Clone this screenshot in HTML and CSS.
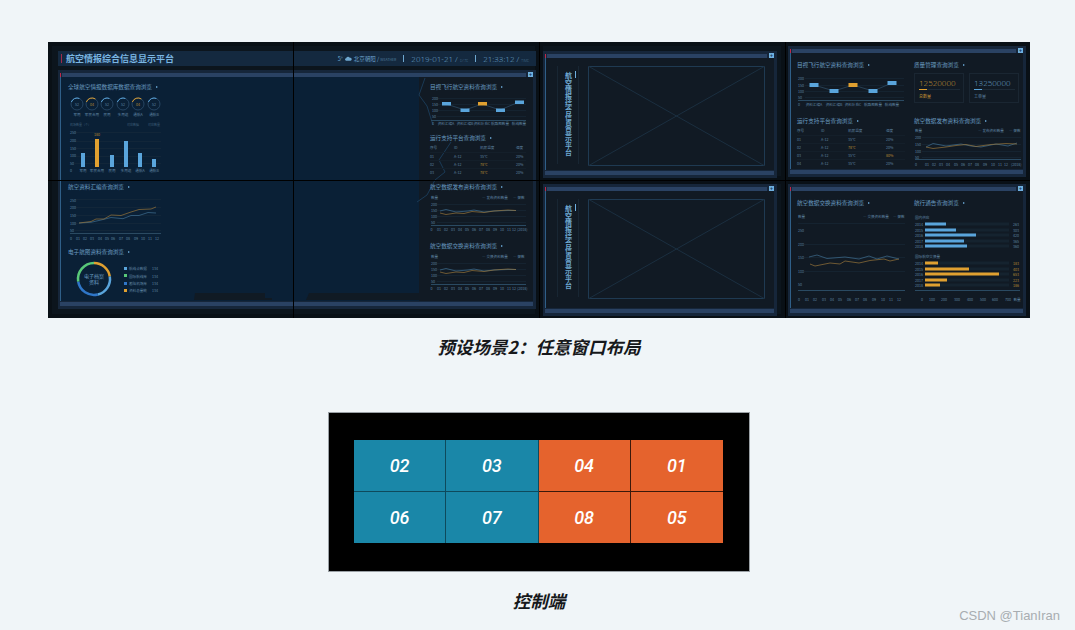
FILE: index.html
```html
<!DOCTYPE html>
<html lang="zh-CN">
<head>
  <meta charset="UTF-8">
  <title>预设场景2</title>
  <link rel="stylesheet" href="styles.css">
</head>
<body>
<div class="page">

  <div class="wall">

    <!-- big window, 2x2 screens -->
    <div class="window window-big">
      <div class="topbar">
        <div class="app-title">航空情报综合信息显示平台</div>
        <div class="status">
          <span class="temp">5°</span>
          <svg class="cloud" viewBox="0 0 8 5" width="7" height="5"><path d="M1.5 5a1.4 1.4 0 0 1-.2-2.8A2.2 2.2 0 0 1 5.4 1.6 1.7 1.7 0 0 1 6.3 5z" fill="#6fa8d0"/></svg>
          <span class="place">北京朝阳 / <small>WEATHER</small></span>
          <i class="sep"></i>
          <span class="big-num">2019-01-21 / <small>DATE</small></span>
          <i class="sep"></i>
          <span class="big-num">21:33:12 / <small>TIME</small></span>
        </div>
      </div>
      <div class="panel panel-big">
        <div class="panel-top"><i class="red"></i><div class="bar"></div><b class="plus">+</b></div>
        <div class="panel-body body-big">

          <div class="col col-left">
            <section>
              <h3 class="sec-title">全球航空情报数据库数据查询浏览</h3>
              <svg class="chart" width="95" height="84" viewBox="65 92 95 84">
                <g class="gauges">
                  <circle cx="74" cy="104" r="6"/><path d="M68.4 102a6 6 0 0 1 8-3.5"/>
                  <circle cx="89" cy="104" r="6"/><path class="or" d="M83.4 102a6 6 0 0 1 9-3"/>
                  <circle cx="104" cy="104" r="6"/><path d="M98.4 102a6 6 0 0 1 8-3.5"/>
                  <circle cx="120" cy="104" r="6"/><path d="M114.4 102a6 6 0 0 1 8-3.5"/>
                  <circle cx="135" cy="104" r="6"/><path class="or" d="M129.4 102a6 6 0 0 1 9-3"/>
                  <circle cx="151" cy="104" r="6"/><path d="M145.4 102a6 6 0 0 1 8-3.5"/>
                </g>
                <g class="tick mid">
                  <text x="74" y="105.500">52</text><text class="t-or" x="89" y="105.500">04</text><text x="104" y="105.500">52</text>
                  <text x="120" y="105.500">52</text><text class="t-or" x="135" y="105.500">04</text><text x="151" y="105.500">52</text>
                  <text x="74" y="116">军用</text><text x="89" y="116">军民合用</text><text x="104" y="116">民用</text>
                  <text x="120" y="116">多用途</text><text x="135" y="116">通航A</text><text x="151" y="116">通航B</text>
                </g>
                <g class="tick dim">
                  <text x="67" y="126">机场数量（个）</text><text x="124" y="126">对应数据</text><text x="145" y="126">对应数量</text>
                </g>
                <g class="grid">
                  <path d="M72 132.500H158M72 141.500H158M72 148.500H158M72 156.500H158M72 163.500H158"/>
                </g>
                <g class="tick">
                  <text x="67" y="134">250</text><text x="67" y="142">200</text><text x="67" y="150">150</text>
                  <text x="67" y="157">100</text><text x="67" y="165">50</text><text x="67" y="172">0</text>
                </g>
                <rect class="blue" x="78" y="153" width="4" height="14"/>
                <rect class="orange" x="92" y="139" width="4" height="28"/>
                <rect class="blue" x="107" y="155" width="4" height="12"/>
                <rect class="blue" x="121" y="141" width="4" height="26"/>
                <rect class="blue" x="135" y="153" width="4" height="14"/>
                <rect class="blue" x="149" y="159" width="4" height="8"/>
                <g class="tick mid">
                  <text class="t-or" x="94" y="136">180</text>
                  <text x="80" y="172">军用</text><text x="94" y="172">军民合用</text><text x="109" y="172">民用</text>
                  <text x="123" y="172">多用途</text><text x="137" y="172">通航A</text><text x="151" y="172">通航B</text>
                </g>
              </svg>
            </section>
            <section>
              <h3 class="sec-title">航空资料汇编查询浏览</h3>
              <svg class="chart" width="95" height="49" viewBox="65 192 95 49">
                <path class="grid-line" d="M72 199.500H158M72 207.500H158M72 215.500H158M72 223.500H158M72 230.500H158"/>
                <path class="axis" d="M67 233.500H158"/>
                <g class="tick">
                  <text x="67" y="201.500">250</text><text x="67" y="209">200</text><text x="67" y="217">150</text>
                  <text x="67" y="224.500">100</text><text x="67" y="232">50</text>
                </g>
                <path class="line-blue" d="M76 223L88 222.300L98 220L108 217.500L120 218.700L128 215.500L136 215.500L145 212.500L153 213"/>
                <path class="line-orange" d="M76 223L88 221.500L93 219L101 219L108 215L118 215.500L128 212L136 209.500L148 209L153 207"/>
                <g class="tick mid">
                  <text x="68" y="239.500">0</text><text x="75" y="239.500">01</text><text x="82" y="239.500">02</text><text x="89" y="239.500">03</text>
                  <text x="97" y="239.500">04</text><text x="104" y="239.500">05</text><text x="110" y="239.500">06</text><text x="118" y="239.500">07</text>
                  <text x="125" y="239.500">08</text><text x="133" y="239.500">09</text><text x="140" y="239.500">10</text><text x="147" y="239.500">11</text><text x="154" y="239.500">12</text>
                </g>
              </svg>
            </section>
            <section>
              <h3 class="sec-title">电子航图资料查询浏览</h3>
              <svg class="chart" width="95" height="43" viewBox="65 257 95 43">
                <g class="donut">
                  <path stroke="#e0a030" d="M91 263a16 16 0 0 1 15.800 13.500"/>
                  <path stroke="#5aa5dc" d="M106.800 276.500a16 16 0 0 1-12 18"/>
                  <path stroke="#2f76c8" d="M94.800 294.500a16 16 0 0 1-19.600-13"/>
                  <path stroke="#58c878" d="M75.200 281.500a16 16 0 0 1 15.800-18.500"/>
                </g>
                <g class="tick mid big-tick"><text x="91" y="278">电子档案</text><text x="91" y="284">资料</text></g>
                <rect x="121" y="267" width="3" height="3" fill="#5aa5dc"/>
                <rect x="121" y="274" width="3" height="3" fill="#58c878"/>
                <rect x="121" y="282" width="3" height="3" fill="#2f76c8"/>
                <rect x="121" y="289" width="3" height="3" fill="#e0a030"/>
                <g class="tick">
                  <text x="126" y="270">航线点数据</text><text x="149" y="270">134</text>
                  <text x="126" y="277.500">国际航线库</text><text x="149" y="277.500">134</text>
                  <text x="126" y="285">著陆机场库</text><text x="149" y="285">134</text>
                  <text x="126" y="292">资料总量统</text><text x="149" y="292">134</text>
                </g>
              </svg>
            </section>
          </div>

          <svg class="land" width="225" height="7" viewBox="197 294 225 7"><path d="M198 294H268V299H275V301H197ZM312 294H422V301H309Z" fill="#101a24"/></svg>

          <div class="col col-right">
            <svg class="map-deco" width="40" height="222" viewBox="416 78 40 222">
              <path d="M428 78L422 95L430 106L436 125M454 142L442 160L448 172L438 180L430 195L420 202" fill="none" stroke="#1a3a56" stroke-width="1"/>
            </svg>
            <section>
              <h3 class="sec-title">目视飞行航空资料查询浏览</h3>
              <svg class="chart" width="98" height="35" viewBox="432 92 98 35">
                <path class="grid-line" d="M439 98.500H528M439 104.500H528M439 110.500H528M439 116.500H528"/>
                <path class="axis" d="M433 120.500H528"/>
                <g class="tick">
                  <text x="434" y="100">200</text><text x="434" y="105.500">150</text><text x="434" y="112">100</text><text x="434" y="118">50</text><text x="434" y="124.500">0</text>
                </g>
                <path class="line-dim" d="M448 104L467 110L484 104L502 110L521 102"/>
                <g class="tag"><rect x="444" y="102" width="9" height="3.500"/><rect x="462.500" y="108.500" width="9" height="3.500"/><rect class="orange" x="480" y="102" width="9" height="3.500"/><rect x="498" y="108.500" width="9" height="3.500"/><rect x="517" y="100.500" width="9" height="3.500"/></g>
                <g class="tick mid">
                  <text x="448" y="124.500">资料汇编A</text><text x="467" y="124.500">资料汇编B</text><text x="484" y="124.500">资料补充C</text><text x="502" y="124.500">航路图数量</text><text x="521" y="124.500">航线数量</text>
                </g>
              </svg>
            </section>
            <section>
              <h3 class="sec-title">运行支持平台查询浏览</h3>
              <div class="tbl tbl-small">
                <div class="tr th"><span>序号</span><span>ID</span><span>机房温度</span><span>湿度</span></div>
                <div class="tr"><span>01</span><span>A-12</span><span>35℃</span><span>20%</span></div>
                <div class="tr"><span>02</span><span>A-12</span><span class="hot">78℃</span><span>20%</span></div>
                <div class="tr"><span>03</span><span>A-12</span><span class="hot">78℃</span><span>20%</span></div>
              </div>
            </section>
            <section>
              <h3 class="sec-title">航空数据发布资料查询浏览</h3>
              <svg class="chart" width="98" height="43" viewBox="432 196 98 43">
                <use href="#mini-line" x="0" y="0"/>
                <text class="tick" x="484" y="203">— 发布资料数量</text><text class="tick" x="515" y="203">— 架数</text>
              </svg>
            </section>
            <section>
              <h3 class="sec-title">航空数据交换资料查询浏览</h3>
              <svg class="chart" width="98" height="43" viewBox="432 255 98 43">
                <use href="#mini-line" x="0" y="59"/>
                <text class="tick" x="484" y="262">— 交换资料数量</text><text class="tick" x="515" y="262">— 架数</text>
              </svg>
            </section>
          </div>
        </div>
        <div class="bar bar-bottom"></div>
      </div>
    </div>

    <!-- third column -->
    <div class="window window-mid">
      <div class="panel">
        <div class="panel-top"><i class="red"></i><div class="bar"></div><b class="plus">+</b></div>
        <div class="panel-body body-holder">
          <div class="v-title"><span>航空情报综合信息显示平台</span></div>
          <svg class="holder" width="177" height="100" viewBox="0 0 177 100" preserveAspectRatio="none">
            <rect x="0.500" y="0.500" width="176" height="99" fill="none" stroke="#1f3a52"/>
            <path d="M0 0L177 100M177 0L0 100" stroke="#1b2f40" fill="none"/>
          </svg>
        </div>
        <div class="bar bar-bottom"></div>
      </div>
    </div>

    <!-- fourth column, top -->
    <div class="window window-side">
      <div class="panel">
        <div class="panel-top"><i class="red"></i><div class="bar"></div><b class="plus">+</b></div>
        <div class="panel-body body-two">
          <section>
            <h3 class="sec-title">目视飞行航空资料查询浏览</h3>
            <svg class="chart" width="108" height="39" viewBox="795 68 108 39">
              <path class="grid-line" d="M803 76.500H902M803 83.500H902M803 89.500H902M803 95.500H902"/>
              <path class="axis" d="M796 98.500H902"/>
              <g class="tick">
                <text x="796" y="78">200</text><text x="796" y="84.500">150</text><text x="796" y="91">100</text><text x="796" y="97">50</text><text x="796" y="104">0</text>
              </g>
              <path class="line-dim" d="M812 83L832 89L851 83L871 89L890 81"/>
              <g class="tag"><rect x="807.500" y="81" width="9" height="4"/><rect x="827.500" y="87" width="9" height="4"/><rect class="orange" x="846.500" y="81" width="9" height="4"/><rect x="866.500" y="87" width="9" height="4"/><rect x="885.500" y="79" width="9" height="4"/></g>
              <g class="tick mid">
                <text x="812" y="104">资料汇编A</text><text x="832" y="104">资料汇编B</text><text x="851" y="104">资料补充C</text><text x="871" y="104">航路图数量</text><text x="890" y="104">航线数量</text>
              </g>
            </svg>
          </section>
          <section>
            <h3 class="sec-title">质量管理查询浏览</h3>
            <div class="stats">
              <div class="stat stat-or">
                <div class="stat-num">12520000</div>
                <div class="stat-line"><i></i></div>
                <div class="stat-label">总数量</div>
              </div>
              <div class="stat">
                <div class="stat-num">13250000</div>
                <div class="stat-line"><i></i></div>
                <div class="stat-label">工单量</div>
              </div>
            </div>
          </section>
          <section>
            <h3 class="sec-title">运行支持平台查询浏览</h3>
            <div class="tbl tbl-wide">
              <div class="tr th"><span>序号</span><span>ID</span><span>机房温度</span><span>湿度</span></div>
              <div class="tr"><span>01</span><span>A-12</span><span>35℃</span><span>20%</span></div>
              <div class="tr"><span>02</span><span>A-12</span><span class="hot">78℃</span><span>20%</span></div>
              <div class="tr"><span>03</span><span>A-12</span><span>35℃</span><span class="hot">80%</span></div>
              <div class="tr"><span>04</span><span>A-12</span><span>35℃</span><span>20%</span></div>
            </div>
          </section>
          <section>
            <h3 class="sec-title">航空数据发布资料查询浏览</h3>
            <svg class="chart" width="108" height="43" viewBox="913 125 108 43">
              <g class="tick">
                <text x="914" y="131">数量</text><text x="977" y="131">— 发布资料数量</text><text x="1008" y="131">— 架数</text>
                <text x="914" y="138">200</text><text x="914" y="144.500">150</text><text x="914" y="151.500">100</text><text x="914" y="158">50</text>
              </g>
              <path class="grid-line" d="M921 136.500H1020M921 143.500H1020M921 150.500H1020M921 156.500H1020"/>
              <path class="axis" d="M914 158.500H1020"/>
              <path class="line-blue" d="M925 146L932 142.500L945 145L960 143L970 145L980 146L995 143L1007 145L1016 142"/>
              <path class="line-orange" d="M925 146L932 147.500L945 146L955 144.500L965 143.500L975 145.500L990 143.500L1005 142.500L1016 143"/>
              <g class="tick">
                <text x="914" y="164.500">0</text><text x="924" y="164.500">01</text><text x="931" y="164.500">02</text><text x="938" y="164.500">03</text><text x="945" y="164.500">04</text><text x="953" y="164.500">05</text><text x="960" y="164.500">06</text><text x="967" y="164.500">07</text><text x="974" y="164.500">08</text><text x="982" y="164.500">09</text><text x="990" y="164.500">10</text><text x="997" y="164.500">11</text><text x="1003" y="164.500">12</text><text x="1010" y="164.500">(2018)</text>
              </g>
            </svg>
          </section>
        </div>
        <div class="bar bar-bottom"></div>
      </div>
    </div>

    <div class="window window-mid window-low">
      <div class="panel">
        <div class="panel-top"><i class="red"></i><div class="bar"></div><b class="plus">+</b></div>
        <div class="panel-body body-holder">
          <div class="v-title"><span>航空情报综合信息显示平台</span></div>
          <svg class="holder" width="177" height="100" viewBox="0 0 177 100" preserveAspectRatio="none">
            <rect x="0.500" y="0.500" width="176" height="99" fill="none" stroke="#1f3a52"/>
            <path d="M0 0L177 100M177 0L0 100" stroke="#1b2f40" fill="none"/>
          </svg>
        </div>
        <div class="bar bar-bottom"></div>
      </div>
    </div>

    <!-- fourth column, bottom -->
    <div class="window window-side window-low">
      <div class="panel">
        <div class="panel-top"><i class="red"></i><div class="bar"></div><b class="plus">+</b></div>
        <div class="panel-body body-two body-low">
          <section>
            <h3 class="sec-title">航空数据交换资料查询浏览</h3>
            <svg class="chart" width="108" height="97" viewBox="795 207 108 97">
              <g class="tick">
                <text x="796" y="217">数量</text><text x="861" y="217">— 交换资料数量</text><text x="891" y="217">— 架数</text>
                <text x="796" y="231">250</text><text x="796" y="245">200</text><text x="796" y="258">150</text><text x="796" y="272">100</text><text x="796" y="285">50</text>
              </g>
              <path class="grid-line" d="M796 222.500H903M796 243.500H903M796 256.500H903M796 270.500H903"/>
              <path class="axis" d="M796 289.500H903"/>
              <path class="line-blue" d="M807 256L815 254L825 257.500L843 256L857 258L867 255L875 258L885 255L897 258"/>
              <path class="line-orange" d="M808 263L813 265L828 262L838 263L843 260L857 262L868 259.500L882 258L888 260L897 258"/>
              <g class="tick mid">
                <text x="797" y="300">0</text><text x="805" y="300">01</text><text x="813" y="300">02</text><text x="822" y="300">03</text><text x="830" y="300">04</text><text x="838" y="300">05</text><text x="847" y="300">06</text><text x="855" y="300">07</text><text x="863" y="300">08</text><text x="872" y="300">09</text><text x="881" y="300">10</text><text x="889" y="300">11</text><text x="897" y="300">12</text>
              </g>
            </svg>
          </section>
          <section>
            <h3 class="sec-title">航行通告查询浏览</h3>
            <svg class="chart" width="108" height="97" viewBox="913 207 108 97">
              <g class="tick">
                <text x="914" y="218">国内供应</text><text x="914" y="257">国际航空交换量</text>
                <text x="914" y="224.500">2014</text><text x="914" y="230.500">2015</text><text x="914" y="235.500">2016</text><text x="914" y="241.500">2017</text><text x="914" y="246.500">2018</text>
                <text x="914" y="263.500">2014</text><text x="914" y="269.500">2015</text><text x="914" y="274.500">2016</text><text x="914" y="280.500">2017</text><text x="914" y="285.500">2018</text>
              </g>
              <g fill="#15232f">
                <rect x="924" y="221.500" width="84" height="3"/><rect x="924" y="227.500" width="84" height="3"/><rect x="924" y="232.500" width="84" height="3"/><rect x="924" y="238.500" width="84" height="3"/><rect x="924" y="243.500" width="84" height="3"/>
                <rect x="924" y="260.500" width="84" height="3"/><rect x="924" y="266.500" width="84" height="3"/><rect x="924" y="271.500" width="84" height="3"/><rect x="924" y="277.500" width="84" height="3"/><rect x="924" y="282.500" width="84" height="3"/>
              </g>
              <g class="blue">
                <rect x="924" y="221.500" width="21" height="3"/><rect x="924" y="227.500" width="31" height="3"/><rect x="924" y="232.500" width="51" height="3"/><rect x="924" y="238.500" width="39" height="3"/><rect x="924" y="243.500" width="42" height="3"/>
              </g>
              <g class="orange">
                <rect x="924" y="260.500" width="13" height="3"/><rect x="924" y="266.500" width="44" height="3"/><rect x="924" y="271.500" width="74" height="3"/><rect x="924" y="277.500" width="22" height="3"/><rect x="924" y="282.500" width="15" height="3"/>
              </g>
              <g class="tick">
                <text x="1012" y="224.500">263</text><text x="1012" y="230.500">303</text><text x="1012" y="235.500">420</text><text x="1012" y="241.500">365</text><text x="1012" y="246.500">360</text>
              </g>
              <g class="tick t-or">
                <text x="1012" y="263.500">183</text><text x="1012" y="269.500">403</text><text x="1012" y="274.500">653</text><text x="1012" y="280.500">223</text><text x="1012" y="285.500">186</text>
              </g>
              <path class="axis" d="M914 289.500H1019"/>
              <g class="tick mid">
                <text x="921" y="300">0</text><text x="931" y="300">100</text><text x="943" y="300">200</text><text x="956" y="300">300</text><text x="969" y="300">400</text><text x="982" y="300">500</text><text x="994" y="300">600</text><text x="1007" y="300">700</text><text x="1016" y="300">数量</text>
              </g>
            </svg>
          </section>
        </div>
        <div class="bar bar-bottom"></div>
      </div>
    </div>

    <!-- black seams between the physical screens -->
    <i class="seam seam-v s1"></i>
    <i class="seam seam-v s2"></i>
    <i class="seam seam-v s3"></i>
    <i class="seam seam-h"></i>
  </div>

  <h2 class="caption">预设场景2：任意窗口布局</h2>

  <div class="control">
    <div class="cells">
      <div class="cell teal">02</div>
      <div class="cell teal">03</div>
      <div class="cell orange-cell">04</div>
      <div class="cell orange-cell">01</div>
      <div class="cell teal">06</div>
      <div class="cell teal">07</div>
      <div class="cell orange-cell">08</div>
      <div class="cell orange-cell">05</div>
    </div>
  </div>

  <h2 class="caption">控制端</h2>
</div>

<div class="watermark">CSDN @TianIran</div>

<!-- shared small line chart -->
<svg class="defs" width="0" height="0">
  <defs>
    <g id="mini-line">
      <g class="tick">
        <text x="433" y="203">数量</text>
        <text x="433" y="209.500">200</text><text x="433" y="215.500">150</text><text x="433" y="222">100</text><text x="433" y="228">50</text>
      </g>
      <path class="grid-line" d="M439 208.500H528M439 214.500H528M439 220.500H528M439 226.500H528"/>
      <path class="axis" d="M433 229.500H528"/>
      <path class="line-blue" d="M442 215L448 213.500L458 216L470 215L476 214L486 216L496 215L510 214.500L518 214.500"/>
      <path class="line-orange" d="M442 217L448 218.500L458 217L466 217.500L474 215.500L486 216.500L496 215L510 214L518 214.500"/>
      <g class="tick">
        <text x="432.500" y="235">0</text><text x="439" y="235">01</text><text x="446" y="235">02</text><text x="453" y="235">03</text><text x="460" y="235">04</text><text x="467" y="235">05</text><text x="474" y="235">06</text><text x="481" y="235">07</text><text x="488" y="235">08</text><text x="495" y="235">09</text><text x="502" y="235">10</text><text x="509" y="235">11</text><text x="514" y="235">12</text><text x="519" y="235">(2018)</text>
      </g>
    </g>
  </defs>
</svg>
</body>
</html>
```

FILE: styles.css
```css
* {
  box-sizing: border-box;
}

body {
  margin: 0;
  height: 630px;
  overflow: hidden;
  background: #f0f5f8;
  font-family: "Noto Sans CJK SC", "Noto Sans", sans-serif;
}

.page {
  width: 982px;
  margin-left: 48px;
  padding-top: 42px;
  display: flex;
  flex-direction: column;
  align-items: center;
}

/* video wall */
.wall {
  position: relative;
  width: 982px;
  height: 276px;
  display: grid;
  grid-template-columns: 491px 246px 245px;
  grid-template-rows: 138px 138px;
  background: #000;
  overflow: hidden;
}

.window {
  display: flex;
  flex-direction: column;
  background: #0c151d;
  box-shadow: inset 0 0 0 4px #091016;
}

.window-big {
  grid-row: 1 / 3;
  padding: 9px 3px 9px 10px;
}

.window-mid {
  padding: 9px 8px 2px 4px;
}

.window-side {
  padding: 4px 4px 3px 3px;
}

.window-low {
  padding-top: 4px;
  padding-bottom: 2px;
}

.topbar {
  height: 15px;
  padding: 0 7px 0 3px;
  flex: none;
  display: flex;
  align-items: center;
  justify-content: space-between;
  background: #14293f;
  color: #6fa8d0;
}

.app-title {
  padding-left: 4px;
  border-left: 1px solid #a02a4a;
  font-size: 9px;
  line-height: 9px;
  font-weight: 700;
  color: #7ab6e2;
}

.status {
  display: flex;
  align-items: center;
  font-size: 5.500px;
}

.temp {
  margin-right: 2px;
}

.place {
  margin-left: 2px;
}

.status small {
  font-size: 3.500px;
  color: #4f7a9c;
}

.sep {
  width: 1px;
  height: 7px;
  margin: 0 7px;
  background: #6fa8d0;
}

.big-num {
  font-family: "Open Sans", sans-serif;
  font-size: 8px;
  font-weight: 300;
}

.panel {
  flex: 1;
  min-height: 0;
  display: flex;
  flex-direction: column;
  padding: 2px 3px 3px 2px;
  background: #16263a;
}

.panel-big {
  margin-top: 4px;
}

.panel-top {
  height: 5px;
  flex: none;
  display: flex;
  align-items: center;
  gap: 1px;
}

.red {
  width: 1px;
  height: 4px;
  background: #c02848;
}

.bar {
  flex: 1;
  height: 4px;
  background: #2a4263;
}

.plus {
  width: 5px;
  height: 5px;
  margin-left: 1px;
  background: #6fb0e0;
  color: #12304c;
  font: 700 5px/5px "Liberation Sans", sans-serif;
  text-align: center;
}

.bar-bottom {
  flex: none;
  margin-top: 1px;
}

.panel-body {
  position: relative;
  flex: 1;
  min-height: 0;
  display: flex;
  border-left: 1px solid #2f5f88;
  background: #111a24;
}

.body-big {
  justify-content: space-between;
  background: #0a2036;
}

.col {
  display: flex;
  flex-direction: column;
  gap: 8px;
  padding-top: 7px;
}

.col-left {
  width: 110px;
  padding-left: 7px;
}

.col-right {
  position: relative;
  width: 114px;
  padding-left: 11px;
  background: #111a24;
}

.land {
  position: absolute;
  right: 114px;
  bottom: 1px;
}

.map-deco {
  position: absolute;
  left: -6px;
  top: 1px;
}

.col-right section {
  position: relative;
}

.sec-title {
  height: 6px;
  margin: 0 0 2px;
  display: flex;
  align-items: center;
  gap: 4px;
  font-size: 5.600px;
  line-height: 6px;
  font-weight: 400;
  color: #6a9cc0;
  white-space: nowrap;
}

.sec-title::after {
  content: "";
  border-left: 2.500px solid #6fb0e0;
  border-top: 1.500px solid transparent;
  border-bottom: 1.500px solid transparent;
}

.chart {
  display: block;
  overflow: visible;
}

.tick text,
text.tick {
  font-size: 3.600px;
  fill: #5f84a2;
  font-family: "Noto Sans CJK SC", sans-serif;
}

.big-tick text {
  font-size: 5px;
  fill: #6a9cc0;
}

.mid text {
  text-anchor: middle;
}

.dim text {
  fill: #3d5c76;
  font-size: 3px;
}

.tick .t-or,
.t-or text {
  fill: #b98a35;
}

.gauges circle {
  fill: none;
  stroke: #2c4c6c;
  stroke-width: 0.800;
}

.gauges path {
  fill: none;
  stroke: #5aa5dc;
  stroke-width: 1;
}

.gauges path.or {
  stroke: #e0a030;
}

.grid path,
.grid-line {
  fill: none;
  stroke: #1a2c3c;
  stroke-width: 0.500;
}

.axis {
  fill: none;
  stroke: #2a4a62;
  stroke-width: 1;
}

.blue,
.tag rect {
  fill: #5aa5dc;
}

.orange,
.tag rect.orange {
  fill: #e0a030;
}

.line-blue,
.line-orange,
.line-dim {
  fill: none;
  stroke-width: 0.700;
}

.line-blue {
  stroke: #3f6f90;
}

.line-orange {
  stroke: #96743a;
}

.line-dim {
  stroke: #2f4f68;
}

.donut path {
  fill: none;
  stroke-width: 2.500;
}

/* tables */
.tbl {
  font-size: 3.600px;
  color: #5f84a2;
}

.tr {
  display: grid;
  height: 8px;
  align-items: center;
  border-top: 1px solid #141f2a;
}

.th {
  height: 9px;
  border-top: 0;
}

.tbl-small .tr {
  grid-template-columns: 24px 26px 36px 1fr;
  width: 96px;
}

.tbl-wide .tr {
  grid-template-columns: 24px 27px 38px 1fr;
  width: 108px;
}

.hot {
  color: #b98a35;
}

/* third column */
.body-holder {
  padding: 8px 9px 0 11px;
  gap: 9px;
}

.v-title {
  width: 25px;
  height: 98px;
  padding-top: 6px;
  position: relative;
  display: flex;
  justify-content: center;
  border-left: 1px solid #182633;
  border-right: 1px solid #182633;
}

.v-title span {
  writing-mode: vertical-rl;
  font-size: 7px;
  line-height: 7px;
  font-weight: 700;
  color: #6fa8d0;
}

.v-title::after {
  content: "";
  position: absolute;
  left: 17px;
  top: 5px;
  width: 1px;
  height: 7px;
  background: #6fb0e0;
}

.holder {
  flex: none;
}

/* fourth column */
.body-two {
  display: grid;
  grid-template-columns: 108px 108px;
  grid-template-rows: 56px auto;
  column-gap: 9px;
  padding: 9px 0 0 6px;
  align-content: start;
}

.body-low {
  grid-template-rows: auto;
}

.stats {
  display: flex;
  gap: 5px;
  margin-top: 5px;
}

.stat {
  width: 50px;
  height: 30px;
  padding: 3px 3px 0 4px;
  border: 1px solid #1a2632;
  font-size: 4px;
  color: #5f84a2;
}

.stat-num {
  font-family: "Open Sans", sans-serif;
  font-size: 8px;
  line-height: 11px;
  font-weight: 300;
  color: #6fa8d0;
}

.stat-or .stat-num,
.stat-or .stat-label {
  color: #d09a35;
}

.stat-line {
  height: 1px;
  margin-top: 1px;
  background: #1d2a36;
}

.stat-line i {
  display: block;
  width: 8px;
  height: 1px;
  background: #5aa5dc;
}

.stat-or .stat-line i {
  background: #e0a030;
}

.stat-label {
  margin-top: 3px;
  line-height: 6px;
}

.seam {
  position: absolute;
  background: #000;
}

.seam-v {
  top: 0;
  bottom: 0;
  width: 1px;
}

.s1 { left: 245px; }
.s2 { left: 491px; }
.s3 { left: 737px; }

.seam-h {
  left: 0;
  right: 0;
  top: 138px;
  height: 1px;
}

/* captions and control */
.caption {
  height: 24px;
  margin: 17px 0 0;
  font-size: 17.500px;
  line-height: 24px;
  font-weight: 700;
  font-style: italic;
  color: #16181b;
}

.control {
  width: 422px;
  height: 160px;
  margin-top: 53px;
  display: flex;
  align-items: center;
  justify-content: center;
  background: #000;
  border: 1px solid #9aa0a5;
}

.control + .caption {
  margin-top: 17px;
}

.cells {
  width: 369px;
  height: 103px;
  margin-right: 1px;
  margin-top: -1px;
  display: grid;
  grid-template-columns: repeat(4, 1fr);
  grid-template-rows: repeat(2, 1fr);
}

.cell {
  display: flex;
  align-items: center;
  justify-content: center;
  color: #fff;
  font-family: "Roboto", sans-serif;
  font-size: 18px;
  font-weight: 500;
  font-style: italic;
  border-right: 1px solid rgba(0, 0, 0, 0.45);
  border-bottom: 1px solid rgba(0, 0, 0, 0.45);
}

.teal {
  background: #1a87a8;
}

.orange-cell {
  background: #e5632d;
  border-color: rgba(0, 0, 0, 0.75);
}

.cell:nth-child(n+5) {
  border-bottom: 0;
}

.cell:nth-child(4n) {
  border-right: 0;
}

.watermark {
  position: absolute;
  right: 15px;
  top: 607px;
  font-family: "Liberation Sans", sans-serif;
  font-size: 13px;
  line-height: 18px;
  color: #a8adb1;
}

.defs {
  position: absolute;
}
```
